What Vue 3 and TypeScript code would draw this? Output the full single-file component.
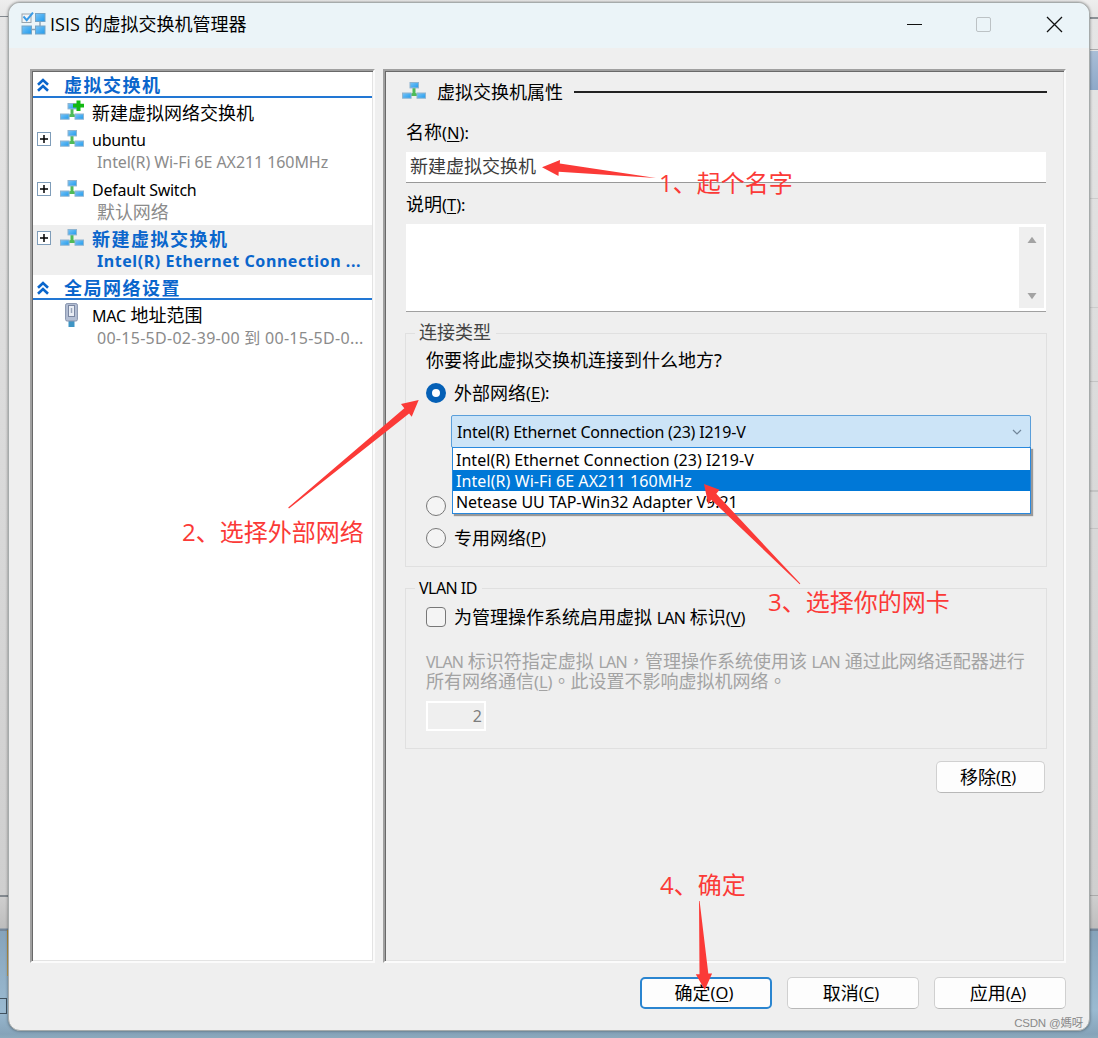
<script setup lang="ts">
import { ref } from 'vue'

interface SwitchNode {
  name: string
  detail: string
  selected: boolean
  cjkName: boolean
}

const nodes: SwitchNode[] = [
  { name: 'ubuntu', detail: 'Intel(R) Wi-Fi 6E AX211 160MHz', selected: false, cjkName: false },
  { name: 'Default Switch', detail: '默认网络', selected: false, cjkName: false },
  { name: '新建虚拟交换机', detail: 'Intel(R) Ethernet Connection ...', selected: true, cjkName: true },
]

const adapters: string[] = [
  'Intel(R) Ethernet Connection (23) I219-V',
  'Intel(R) Wi-Fi 6E AX211 160MHz',
  'Netease UU TAP-Win32 Adapter V9.21',
]
const chosen = ref(0)
const hovered = ref(1)
</script>

<template>
  <div class="desktop">
    <svg width="0" height="0" class="defs">
      <defs>
        <linearGradient id="screen" x1="0" y1="0" x2="1" y2="1">
          <stop offset="0" stop-color="#7cc4f5" />
          <stop offset="1" stop-color="#1f9bee" />
        </linearGradient>
        <symbol id="switch" viewBox="0 0 24 17">
          <path d="M10.500 6h3v5l3.500 1.500V14H7v-1.500l3.500-1.500z" fill="#4fbb58" />
          <rect x="8" y=".5" width="8.500" height="5.400" fill="url(#screen)" stroke="#8fb4d0" />
          <rect x=".5" y="11" width="8.600" height="5.200" fill="url(#screen)" stroke="#8fb4d0" />
          <rect x="15" y="11" width="8.600" height="5.200" fill="url(#screen)" stroke="#8fb4d0" />
        </symbol>
        <symbol id="collapse" viewBox="0 0 12 14">
          <path d="M1 6.800 6 2l5 4.800M1 12.800 6 8l5 4.800" fill="none" stroke="#0a66cc" stroke-width="2.600" />
        </symbol>
      </defs>
    </svg>

    <div class="window">
      <header class="titlebar">
        <svg class="app-icon" width="25" height="23" viewBox="0 0 25 23">
          <path d="M10 17.500h6M19 10v5" stroke="#8aa0b0" stroke-width="1.400" />
          <rect x="1" y="2" width="9" height="8.500" fill="#f2f5f7" stroke="#9aa5ad" />
          <rect x="14.500" y="1.500" width="9.500" height="8" fill="url(#screen)" stroke="#77a4c4" />
          <rect x="1" y="14" width="9.500" height="8" fill="url(#screen)" stroke="#77a4c4" />
          <rect x="14.500" y="14" width="9.500" height="8" fill="url(#screen)" stroke="#77a4c4" />
          <path d="m2.500 4.500 3.200 3.600L12 .6" fill="none" stroke="#3a9be6" stroke-width="2" />
        </svg>
        <span class="title">ISIS 的虚拟交换机管理器</span>
        <svg class="controls" width="160" height="20" viewBox="0 0 160 20">
          <path d="M1 10.500h15" stroke="#111" />
          <rect x="70.500" y="3.500" width="14" height="14" rx="1.500" fill="none" stroke="#bcc2c5" />
          <path d="m141 3 15 15m0-15-15 15" stroke="#111" stroke-width="1.300" />
        </svg>
      </header>

      <main class="panes">
        <nav class="tree">
          <h2 class="section"><svg class="chev" width="12" height="14"><use href="#collapse" /></svg>虚拟交换机</h2>
          <div class="create">
            <svg class="create-icon" width="25" height="21" viewBox="0 0 25 21">
              <use href="#switch" y="3" width="24" height="17" />
              <path d="M16.500 .5h4v3.300h3.500v3.800h-3.500v3.300h-4V7.600h-3.500V3.800h3.500z" fill="#12b912" />
            </svg>
            <span>新建虚拟网络交换机</span>
          </div>
          <div v-for="n in nodes" :key="n.name" class="node" :class="{ selected: n.selected }">
            <svg class="plus" width="14" height="14" viewBox="0 0 14 14">
              <rect x=".5" y=".5" width="13" height="13" fill="#fff" stroke="#7f9db9" />
              <path d="M3 7h8M7 3v8" stroke="#000" stroke-width="1.500" />
            </svg>
            <svg class="node-icon" width="24" height="17"><use href="#switch" /></svg>
            <div class="texts">
              <div class="name" :class="{ cjk: n.cjkName }">{{ n.name }}</div>
              <div class="detail">{{ n.detail }}</div>
            </div>
          </div>
          <h2 class="section"><svg class="chev" width="12" height="14"><use href="#collapse" /></svg>全局网络设置</h2>
          <div class="node mac">
            <svg class="mac-icon" width="13" height="24" viewBox="0 0 13 24">
              <path d="M3.500 18h6v6h-6z" fill="#3f95c4" />
              <rect x=".6" y=".6" width="11.800" height="17.400" rx="1.500" fill="#b4bfd4" stroke="#8793ad" />
              <rect x="3.500" y="2.500" width="6" height="11" fill="#e9edf4" stroke="#7b87a2" />
              <path d="M6.500 5v5" stroke="#9aa5bb" stroke-width="1.500" />
            </svg>
            <div class="texts">
              <div class="name"><span class="latin">MAC</span> 地址范围</div>
              <div class="detail range">00-15-5D-02-39-00 到 00-15-5D-0...</div>
            </div>
          </div>
        </nav>

        <section class="props">
          <div class="heading">
            <svg width="24" height="17"><use href="#switch" /></svg>
            <span>虚拟交换机属性</span>
            <i></i>
          </div>
          <div class="label first">名称<span class="key">(<u>N</u>):</span></div>
          <div class="field">新建虚拟交换机</div>
          <div class="label second">说明<span class="key">(<u>T</u>):</span></div>
          <div class="notes">
            <div class="scroll">
              <svg width="10" height="8"><path d="M.5 7 5 .8 9.500 7z" fill="#a3a3a3" /></svg>
              <svg width="10" height="8"><path d="M.5 1 5 7.200 9.500 1z" fill="#a3a3a3" /></svg>
            </div>
          </div>

          <div class="group connection">
            <div class="legend soft">连接类型</div>
            <div class="question">你要将此虚拟交换机连接到什么地方?</div>
            <div class="option"><span class="radio on"></span>外部网络<span class="key">(<u>E</u>):</span></div>
            <div class="combo">
              <span>{{ adapters[chosen] }}</span>
              <svg width="10" height="6" viewBox="0 0 10 6"><path d="m1 1 4 4 4-4" fill="none" stroke="#71869a" stroke-width="1.200" /></svg>
              <ul class="menu">
                <li v-for="(a, i) in adapters" :key="a" :class="{ hot: i === hovered }">{{ a }}</li>
              </ul>
            </div>
            <div class="option"><span class="radio"></span>内部网络<span class="key">(<u>I</u>)</span></div>
            <div class="option"><span class="radio"></span>专用网络<span class="key">(<u>P</u>)</span></div>
          </div>

          <div class="group vlan">
            <div class="legend">VLAN ID</div>
            <div class="option check"><span class="box"></span><span>为管理操作系统启用虚拟 <span class="lan">LAN</span> 标识<span class="key">(<u>V</u>)</span></span></div>
            <p class="hint">
              <span class="lan">VLAN</span> 标识符指定虚拟 <span class="lan">LAN</span><span class="mid">，</span>管理操作系统使用该 <span class="lan">LAN</span> 通过此网络适配器进行<br />所有网络通信<span class="key">(<u>L</u>)</span><span class="mid">。</span>此设置不影响虚拟机网络<span class="mid">。</span>
            </p>
            <div class="vid">2</div>
          </div>
          <div class="btn remove">移除<span class="key">(<u>R</u>)</span></div>
        </section>
      </main>

      <footer class="actions">
        <div class="btn primary">确定<span class="key">(<u>O</u>)</span></div>
        <div class="btn">取消<span class="key">(<u>C</u>)</span></div>
        <div class="btn">应用<span class="key">(<u>A</u>)</span></div>
      </footer>
    </div>

    <div class="notes-layer">
      <svg width="1098" height="1038" viewBox="0 0 1098 1038" fill="#fb3a37">
        <path d="m542 167.300 18-7.300-.2 3.500L656 178l-97.300-6.300-.2 4.300z" />
        <path d="m418.700 400-7 16.800-2.600-3.400L289 508.500l-.8-.9L404.300 408.300l-3.300-4.300z" />
        <path d="m704 484 15.500 5.800-3.200 4 84 89.800-.6.600-88.400-84.400-3 4.700z" />
        <path d="m704.800 990-9-15.800h3.700L699 901h.600l8.700 72.600h3.800z" />
      </svg>
      <span class="mark m1">1、起个名字</span>
      <span class="mark m2">2、选择外部网络</span>
      <span class="mark m3">3、选择你的网卡</span>
      <span class="mark m4">4、确定</span>
      <span class="credit">CSDN @媽呀</span>
    </div>
  </div>
</template>

<style>
body {
  margin: 0;
  overflow: hidden;
}
</style>

<style scoped>
* {
  box-sizing: border-box;
}
.desktop {
  position: relative;
  width: 1098px;
  height: 1038px;
  padding: 2px 8px 7px 8px;
  overflow: hidden;
  font: 18px/22px "Noto Sans", "Noto Sans CJK SC", sans-serif;
  color: #000;
  background:
    linear-gradient(#8b9196, #8b9196) 1090px 17px / 8px 2px no-repeat,
    linear-gradient(#a9bdd6, #8ea9c9) 1090px 51px / 8px 39px no-repeat,
    linear-gradient(#aaa, #aaa) 1090px 49px / 8px 1px no-repeat,
    linear-gradient(#ccc, #ccc) 1090px 198px / 8px 1px no-repeat,
    linear-gradient(#ccc, #ccc) 1090px 307px / 8px 1px no-repeat,
    linear-gradient(#c4c4c4, #c4c4c4) 1090px 381px / 8px 1px no-repeat,
    linear-gradient(#c4c4c4, #c4c4c4) 1090px 490px / 8px 2px no-repeat,
    linear-gradient(#c4c4c4, #c4c4c4) 1090px 528px / 8px 1px no-repeat,
    linear-gradient(#aaa, #aaa) 1090px 895px / 8px 1px no-repeat,
    linear-gradient(#83898f, #83898f) 0 16px / 9px 1px no-repeat,
    linear-gradient(#83898f, #83898f) 0 895px / 9px 2px no-repeat,
    linear-gradient(#b58c35, #bfa15c) 7px 930px / 2px 46px no-repeat,
    linear-gradient(#41525f, #41525f) 0 998px / 7px 1px no-repeat,
    linear-gradient(#41525f, #41525f) 0 1013px / 7px 1px no-repeat,
    linear-gradient(#41525f, #41525f) 6px 998px / 1px 16px no-repeat,
    linear-gradient(#eee 0, #e5e5e5 17px, #dedede 300px, #cfcfcf 895px, #bebebe 928px, #74879a 929px, #74879a 931px, #86a3ba 931px, #9abad1 1010px, #86a3b9 1034px, #8caabd 1038px);
}
.defs {
  position: absolute;
}
.window {
  width: 1082px;
  height: 1029px;
  border: 1px solid #a6abab;
  border-radius: 12px;
  background: #efefef;
  box-shadow: 0 0 3px rgba(0, 0, 0, 0.45);
  overflow: hidden;
}
.titlebar {
  display: flex;
  height: 45px;
  padding: 1px 19px 0 12px;
  background: #ebf4f8;
}
.app-icon {
  margin-top: 8px;
}
.title {
  margin: 9px auto 0 4px;
  font-family: "Open Sans", "Noto Sans CJK SC", sans-serif;
  white-space: nowrap;
}
.controls {
  margin-top: 10px;
  margin-right: 4px;
}
.panes {
  display: flex;
  gap: 8px;
  height: 894px;
  margin: 21px 23px 0 21px;
}
.tree,
.props {
  border: 2px solid #fbfbfb;
  border-top-color: #a0a0a0;
  border-left-color: #a0a0a0;
}
.tree {
  width: 345px;
  padding: 1px 1px 0 1px;
  background: #fff;
  box-shadow: inset 1px 1px #696969, inset -1px -1px #e3e3e3;
}
.props {
  flex: 1;
  padding: 1px 18px 0 21px;
  box-shadow: inset 1px 1px #696969, inset -1px -1px #e3e3e3;
}
.section {
  display: flex;
  align-items: center;
  height: 25.500px;
  margin: 0;
  padding: 3px 0 0 4px;
  border-bottom: 2px solid #2277d4;
  color: #0a66cc;
  font-size: 18px;
  font-weight: 700;
  line-height: 22px;
  letter-spacing: 1.500px;
}
.chev {
  margin-right: 15px;
}
.create {
  display: flex;
  height: 28.500px;
  padding: 4px 0 0 27px;
}
.create-icon {
  margin: -2px 7px 0 0;
}
.node {
  display: flex;
  align-items: flex-start;
  height: 49.500px;
  padding: 3px 0 0 4px;
}
.plus {
  margin: 3px 9px 0 0;
}
.node-icon {
  margin: 1px 8px 0 0;
}
.node .name {
  font-size: 16px;
  letter-spacing: -0.250px;
}
.node .detail {
  margin-left: 5px;
  color: #8b8b8b;
  font-size: 16px;
  letter-spacing: -0.080px;
  white-space: nowrap;
}
.node:nth-child(4) .detail {
  font-size: 18px;
}
.node.selected {
  background: #efefef;
  color: #0a66cc;
  font-weight: 700;
}
.node.selected .detail {
  color: #0a66cc;
  letter-spacing: 0.560px;
}
.node .cjk {
  font-size: 18px;
  letter-spacing: 1.500px;
}
.mac {
  padding: 5px 0 0 32px;
}
.mac .name {
  margin-top: -1px;
  font-size: 18px;
  letter-spacing: 0;
}
.mac .latin {
  font-size: 16px;
  letter-spacing: -0.200px;
}
.mac .range {
  letter-spacing: 0.280px;
}
.mac-icon {
  margin: -2px 14px 0 0;
}
.key {
  font-size: 16.500px;
  line-height: 0;
}
.lan {
  font-size: 16px;
  line-height: 0;
  letter-spacing: -0.800px;
}
u {
  text-underline-offset: 2px;
}
.heading {
  display: flex;
  align-items: center;
  height: 40px;
  margin: 0 -1px 0 -4px;
}
.heading svg {
  margin-top: -3px;
}
.heading span {
  margin: 0 11px;
}
.heading i {
  flex: 1;
  height: 2px;
  background: #222;
}
.label {
  height: 22px;
}
.first {
  margin: 9px 0 9px;
}
.field {
  height: 31px;
  padding: 3px 4px;
  border-bottom: 1px solid #999;
  background: #fff;
  color: #3c3c3c;
}
.second {
  margin: 10px 0 9px;
}
.notes {
  display: flex;
  justify-content: flex-end;
  height: 88px;
  padding: 3px 2px;
  border-bottom: 1px solid #a0a0a0;
  background: #fff;
}
.scroll {
  display: flex;
  flex-direction: column;
  justify-content: space-between;
  align-items: center;
  width: 25px;
  padding: 9px 0 8px;
  background: #efefef;
}
.group {
  margin: 21px -1px 0 -1px;
  border: 1px solid #e0e0e0;
  padding-left: 20px;
}
.legend {
  width: max-content;
  height: 22px;
  margin: -13px 0 0 -11px;
  padding: 0 5px 0 4px;
  background: #efefef;
}
.soft {
  color: #444;
}
.connection {
  height: 234px;
}
.question {
  margin-top: 6px;
}
.option {
  display: flex;
  align-items: center;
  height: 32px;
}
.connection > .option:nth-child(3) {
  margin-top: 6px;
}
.radio {
  width: 20px;
  height: 20px;
  margin-right: 8px;
  border: 1.500px solid #777;
  border-radius: 50%;
  background: #f4f4f4;
}
.radio.on {
  border: 6px solid #0560b6;
  background: #fff;
}
.combo {
  position: relative;
  display: flex;
  align-items: center;
  justify-content: space-between;
  width: 580px;
  height: 33px;
  margin: 6px 0 42px 25px;
  padding: 0 8px 0 5px;
  border: 1px solid #5b9fda;
  border-radius: 2px;
  background: #cce4f7;
  font-size: 16px;
  letter-spacing: -0.200px;
}
.menu {
  position: absolute;
  left: 0;
  top: 31px;
  width: 579px;
  margin: 0;
  padding: 1px 0;
  border: 1px solid #2888dd;
  background: #fff;
  box-shadow: 2px 2px 1px #999;
  list-style: none;
  letter-spacing: 0.030px;
}
.menu li {
  height: 21px;
  padding-left: 3px;
  line-height: 22px;
}
.menu .hot {
  background: #0078d7;
  color: #fff;
  letter-spacing: 0.080px;
}
.menu li:last-child {
  letter-spacing: -0.050px;
}
.vlan {
  height: 161px;
}
.vlan .legend {
  padding-top: 1px;
  font-size: 16px;
  letter-spacing: -0.550px;
}
.check {
  margin-top: 3px;
}
.box {
  width: 20px;
  height: 20px;
  margin-right: 8px;
  border: 1.500px solid #777;
  border-radius: 4px;
  background: #f4f4f4;
}
.hint {
  margin: 18px 0 10px;
  color: #a3a3a3;
  line-height: 20px;
  white-space: nowrap;
}
.mid {
  font-family: "Noto Sans CJK TC", sans-serif;
  line-height: 0;
}
.vid {
  width: 60px;
  height: 30px;
  padding: 2px 2px 0;
  border: 2px solid #fff;
  color: #7d7d7d;
  font-size: 16px;
  text-align: right;
}
.btn {
  display: flex;
  align-items: center;
  justify-content: center;
  width: 132px;
  height: 32px;
  padding-right: 4px;
  border: 1px solid #d0d0d0;
  border-bottom-color: #b8b8b8;
  border-radius: 5px;
  background: #fdfdfd;
}
.primary {
  border: 2px solid #2a85d0;
}
.remove {
  width: 109px;
  margin: 12px 1px 0 auto;
  padding-right: 5px;
}
.actions {
  display: flex;
  justify-content: flex-end;
  gap: 15px;
  margin: 14px 23px 0 0;
}
.notes-layer {
  position: absolute;
  inset: 0;
}
.mark {
  position: absolute;
  color: #fb3a37;
  font: 24px/30px "Open Sans", "Noto Sans CJK SC", sans-serif;
  white-space: nowrap;
}
.m1 {
  left: 659px;
  top: 168px;
}
.m2 {
  left: 182px;
  top: 517px;
}
.m3 {
  left: 768px;
  top: 587px;
}
.m4 {
  left: 660px;
  top: 870px;
}
.credit {
  position: absolute;
  right: 15px;
  bottom: 7px;
  color: #8a8a8a;
  font: 11.500px/16px "Liberation Sans", "Noto Sans CJK SC", sans-serif;
  letter-spacing: -0.200px;
}
</style>
